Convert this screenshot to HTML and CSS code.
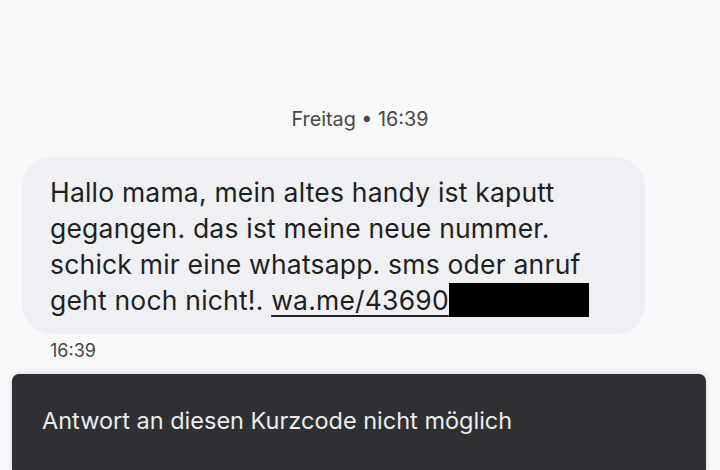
FILE: index.html
```html
<!DOCTYPE html>
<html lang="de">
<head>
    <meta charset="UTF-8">
    <meta name="viewport" content="width=device-width, initial-scale=1.0">
    <title>Nachrichten</title>
    <link rel="stylesheet" href="styles.css">
</head>
<body>
    <div class="thread">
        <div class="day">Freitag &bull; 16:39</div>
        <div class="bubble">
            Hallo mama, mein altes handy ist kaputt gegangen. das ist meine neue nummer. schick mir eine whatsapp. sms oder anruf geht noch nicht!. <a class="link" href="#">wa.me/43690</a><span class="redact"></span>
        </div>
        <div class="time">16:39</div>
    </div>
    <div class="notice">Antwort an diesen Kurzcode nicht möglich</div>
</body>
</html>
```

FILE: styles.css
```css
body {
    margin: 0;
    height: 470px;
    overflow: hidden;
    background-color: #f8f9fb;
    font-family: 'Inter', 'Roboto', sans-serif;
    display: flex;
    flex-direction: column;
}
.thread {
    flex: 1;
    padding-top: 106px;
}
.day {
    text-align: center;
    font-size: 19.8px;
    color: #474747;
    line-height: 26px;
    margin-bottom: 25px;
}
.bubble {
    width: 550px;
    margin-left: 22px;
    padding: 17px 45px 16px 28px;
    background-color: #eef0f3;
    border-radius: 30px;
    font-size: 26.5px;
    letter-spacing: 0.2px;
    line-height: 36px;
    color: #1f1f1f;
}
.link {
    color: #1f1f1f;
    text-decoration: underline;
    text-underline-offset: 5px;
    text-decoration-thickness: 2px;
}
.redact {
    display: inline-block;
    width: 140px;
    height: 34px;
    background-color: #000;
    vertical-align: -7px;
}
.time {
    margin: 6px 0 0 50px;
    font-size: 18px;
    color: #474747;
}
.notice {
    margin: 0 14px 0 12px;
    height: 96px;
    box-sizing: border-box;
    padding: 32px 30px 0 30px;
    background-color: #2e3033;
    border-radius: 7px 7px 0 0;
    color: #ececec;
    font-size: 23.5px;
    box-shadow: 0 0 6px rgba(0, 0, 0, 0.15);
}
```
